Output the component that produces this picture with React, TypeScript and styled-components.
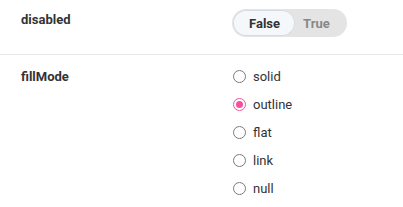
import React, { useState } from 'react';
import styled, { createGlobalStyle } from 'styled-components';

const GlobalStyle = createGlobalStyle`
  body {
    margin: 0;
    background: #ffffff;
    font-family: Roboto, "Liberation Sans", Arial, sans-serif;
    color: #333333;
  }
`;

const options = ['solid', 'outline', 'flat', 'link', 'null'];

export default function App() {
  const [disabled, setDisabled] = useState(false);
  const [fillMode, setFillMode] = useState('outline');

  return (
    <>
      <GlobalStyle />
      <Table>
        <Row>
          <Name top={10}>disabled</Name>
          <Control top={9}>
            <Toggle>
              <ToggleButton active={!disabled} onClick={() => setDisabled(false)}>
                False
              </ToggleButton>
              <ToggleButton active={disabled} onClick={() => setDisabled(true)}>
                True
              </ToggleButton>
            </Toggle>
          </Control>
        </Row>
        <Row>
          <Name top={12}>fillMode</Name>
          <Control top={7}>
            <RadioList>
              {options.map((opt) => (
                <RadioLabel key={opt}>
                  <RadioInput
                    type="radio"
                    name="fillMode"
                    checked={fillMode === opt}
                    onChange={() => setFillMode(opt)}
                  />
                  {opt}
                </RadioLabel>
              ))}
            </RadioList>
          </Control>
        </Row>
      </Table>
    </>
  );
}

const Table = styled.div`
  width: 403px;
`;

const Row = styled.div`
  display: grid;
  grid-template-columns: 232px 1fr;
  border-bottom: 1px solid #e6e6e6;

  &:last-child {
    border-bottom: none;
  }
`;

const Name = styled.div<{ top: number }>`
  padding: ${(p) => p.top}px 21px 0;
  font-size: 13px;
  font-weight: 700;
  color: #333333;
  line-height: 20px;
`;

const Control = styled.div<{ top: number }>`
  padding-top: ${(p) => p.top}px;
`;

const Toggle = styled.div`
  display: inline-flex;
  height: 28px;
  padding: 1px;
  box-sizing: border-box;
  border-radius: 14px;
  background: #e4e4e4;
  margin-bottom: 17px;
`;

const ToggleButton = styled.button<{ active: boolean }>`
  border: none;
  margin: 0;
  height: 26px;
  padding: ${(p) => (p.active ? '0 15px 0 16px' : '0 16px 0 8px')};
  border-radius: 13px;
  font-family: Roboto, "Liberation Sans", Arial, sans-serif;
  font-size: 13px;
  font-weight: 700;
  cursor: pointer;
  background: ${(p) => (p.active ? '#f5f8fb' : 'transparent')};
  color: ${(p) => (p.active ? '#333333' : '#888888')};
  box-shadow: ${(p) => (p.active ? 'inset 0 0 0 1px #d5dbe2' : 'none')};
`;

const RadioList = styled.div`
  display: flex;
  flex-direction: column;
  padding-bottom: 5px;
`;

const RadioLabel = styled.label`
  display: flex;
  align-items: center;
  height: 28px;
  font-size: 13px;
  color: #333333;
  cursor: pointer;
`;

const RadioInput = styled.input`
  appearance: none;
  width: 13px;
  height: 13px;
  margin: 0 7px 0 1px;
  border: 1px solid #7a7a7a;
  border-radius: 50%;
  box-sizing: border-box;
  display: grid;
  place-items: center;
  background: #ffffff;

  &:checked {
    border-color: #f4509d;
  }

  &:checked::after {
    content: '';
    width: 7px;
    height: 7px;
    border-radius: 50%;
    background: #f4509d;
  }
`;
